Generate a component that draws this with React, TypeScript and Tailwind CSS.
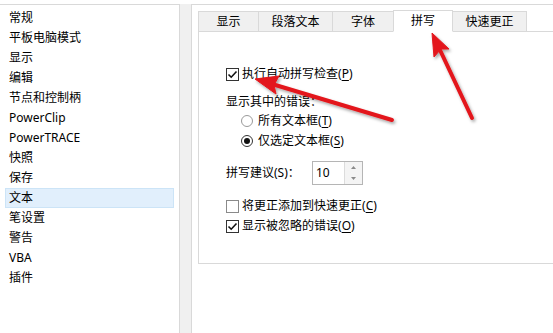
const font = "font-['Noto_Sans','Noto_Sans_CJK_SC',sans-serif]";

const navItems = [
  "常规",
  "平板电脑模式",
  "显示",
  "编辑",
  "节点和控制柄",
  "PowerClip",
  "PowerTRACE",
  "快照",
  "保存",
  "文本",
  "笔设置",
  "警告",
  "VBA",
  "插件",
];

const tabs = [
  { label: "显示", w: "w-[61px]" },
  { label: "段落文本", w: "w-[75px]" },
  { label: "字体", w: "w-[62px]" },
  { label: "拼写", w: "w-[60px]", active: true },
  { label: "快速更正", w: "w-[75px]" },
];

const Check = ({ checked }: { checked: boolean }) => (
  <span
    className={`flex h-[13px] w-[13px] shrink-0 items-center justify-center border bg-white ${
      checked ? "border-[#333333]" : "border-[#8a8a8a]"
    }`}
  >
    {checked && (
      <svg width="11" height="11" viewBox="0 0 11 11">
        <path d="M1.5 5.5 L4.2 8.2 L9.5 2.5" fill="none" stroke="#111" strokeWidth="1.6" />
      </svg>
    )}
  </span>
);

const Radio = ({ checked }: { checked: boolean }) => (
  <span
    className={`flex h-[12px] w-[12px] shrink-0 items-center justify-center rounded-full border bg-white ${
      checked ? "border-[#333333]" : "border-[#9a9a9a]"
    }`}
  >
    {checked && <span className="h-[6px] w-[6px] rounded-full bg-[#111]" />}
  </span>
);

const Key = ({ k }: { k: string }) => (
  <>
    (<span className="underline underline-offset-2">{k}</span>)
  </>
);

const Arrows = () => (
  <svg className="pointer-events-none absolute inset-0" width="553" height="333">
    <defs>
      <filter id="sh" x="-20%" y="-20%" width="140%" height="140%">
        <feDropShadow dx="1.5" dy="2" stdDeviation="1.5" floodColor="#000" floodOpacity="0.35" />
      </filter>
    </defs>
    <g fill="#e3161b" stroke="#e3161b" filter="url(#sh)">
      <line x1="392" y1="120" x2="272" y2="84" strokeWidth="4" strokeLinecap="round" />
      <polygon points="255,79 279,76 274,85 276,94" strokeWidth="1" strokeLinejoin="round" />
      <line x1="472" y1="118" x2="440" y2="50" strokeWidth="4" strokeLinecap="round" />
      <polygon points="432,33 449,49 441,49 434,57" strokeWidth="1" strokeLinejoin="round" />
    </g>
  </svg>
);

export default function App() {
  return (
    <div className={`relative flex h-[333px] w-[553px] overflow-hidden bg-white pt-[4px] text-[12px] text-black ${font}`}>
      <div className="w-[180px] shrink-0 border-t border-r border-[#d9d9d9] bg-white px-[5px] pt-[3px]">
        {navItems.map((item) => (
          <div
            key={item}
            className={`flex h-[20px] items-center border pl-[3px] leading-none ${
              item === "文本" ? "border-[#cce4f7] bg-[#e1effc]" : "border-transparent"
            }`}
          >
            {item}
          </div>
        ))}
      </div>
      <div className="w-[11px] shrink-0 bg-[#f0f0f0]" />
      <div className="flex flex-1 flex-col border-t border-l border-[#d9d9d9] bg-white pl-[6px] pt-[5px]">
        <div className="relative z-10 flex h-[21px] items-end">
          {tabs.map((t) => (
            <div
              key={t.label}
              className={`${t.w} flex shrink-0 items-center justify-center border border-[#d9d9d9] leading-none ${
                t.active
                  ? "-mb-px -ml-px h-[22px] border-b-white bg-white"
                  : "h-[20px] -ml-px border-b-0 bg-[#f0f0f0] first:ml-0"
              }`}
            >
              {t.label}
            </div>
          ))}
        </div>
        <div className="-mr-[20px] flex h-[233px] flex-col border border-[#d9d9d9] pl-[27px] pt-[32px] leading-none">
          <div className="flex h-[20px] items-center gap-[3px]">
            <Check checked />
            <span>
              执行自动拼写检查<Key k="P" />
            </span>
          </div>
          <div className="mt-[8px] flex h-[20px] items-center">显示其中的错误：</div>
          <div className="mt-[-1px] flex h-[20px] items-center gap-[5px] pl-[15px]">
            <Radio checked={false} />
            <span>
              所有文本框<Key k="T" />
            </span>
          </div>
          <div className="flex h-[20px] items-center gap-[5px] pl-[15px]">
            <Radio checked />
            <span>
              仅选定文本框<Key k="S" />
            </span>
          </div>
          <div className="mt-[10px] flex h-[24px] items-center">
            <span className="w-[86px]">拼写建议(S)：</span>
            <div className="flex h-[24px] w-[51px] border border-[#b5b5b5] bg-white">
              <span className="flex flex-1 items-center pl-[3px]">10</span>
              <div className="flex w-[18px] flex-col border-l border-[#dcdcdc] bg-[#f4f4f4]">
                <span className="flex flex-1 items-center justify-center">
                  <svg width="5" height="3" viewBox="0 0 5 3">
                    <path d="M0 3 L2.5 0 L5 3Z" fill="#8a8a8a" />
                  </svg>
                </span>
                <span className="flex flex-1 items-center justify-center">
                  <svg width="5" height="3" viewBox="0 0 5 3">
                    <path d="M0 0 L2.5 3 L5 0Z" fill="#8a8a8a" />
                  </svg>
                </span>
              </div>
            </div>
          </div>
          <div className="mt-[11px] flex h-[20px] items-center gap-[3px]">
            <Check checked={false} />
            <span>
              将更正添加到快速更正<Key k="C" />
            </span>
          </div>
          <div className="flex h-[20px] items-center gap-[3px]">
            <Check checked />
            <span>
              显示被忽略的错误<Key k="O" />
            </span>
          </div>
        </div>
      </div>
      <Arrows />
    </div>
  );
}
